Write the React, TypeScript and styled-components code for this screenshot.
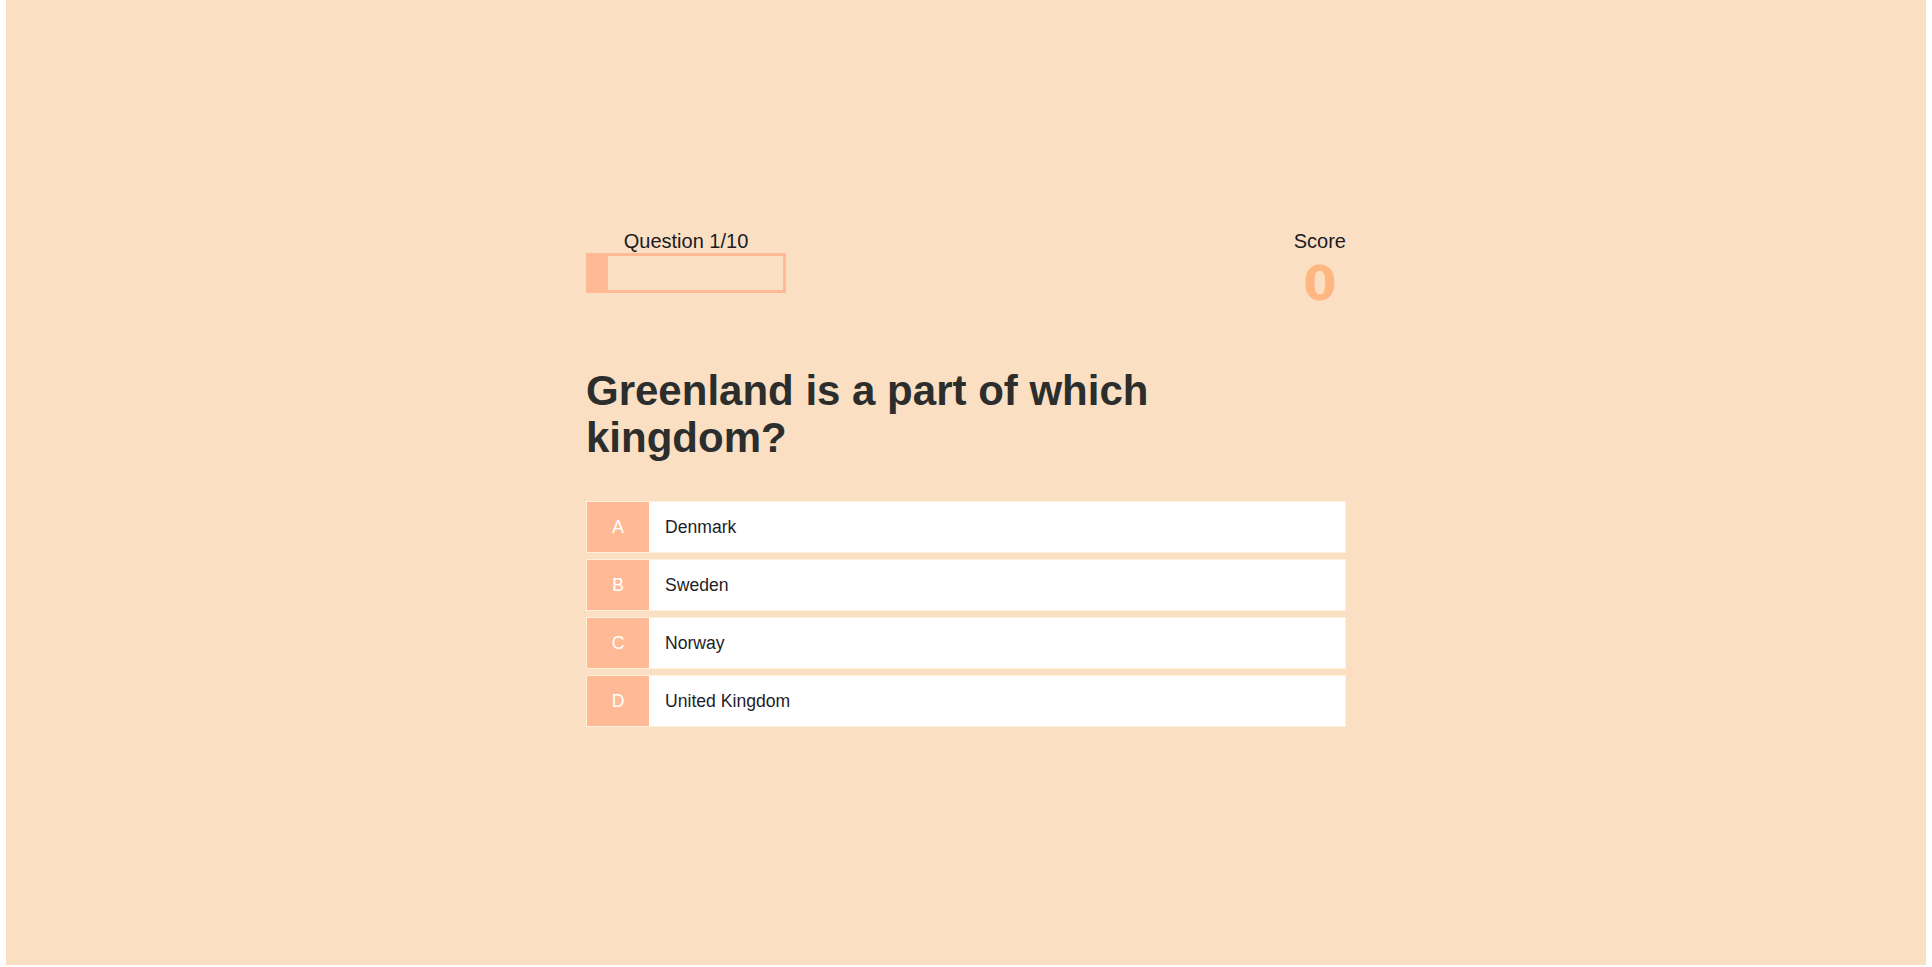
import React from "react";
import styled, { createGlobalStyle } from "styled-components";

const GlobalStyle = createGlobalStyle`
  html, body {
    margin: 0;
    padding: 0;
    background: #ffffff;
  }
  body {
    font-family: "Liberation Sans", Arial, sans-serif;
  }
  * { box-sizing: border-box; }
`;

const Page = styled.div`
  margin: 0 6px;
  height: 965px;
  background: #fadfc3;
  display: flex;
  justify-content: center;
  padding-top: 230px;
`;

const Quiz = styled.main`
  width: 760px;
  display: flex;
  flex-direction: column;
`;

const Header = styled.header`
  display: flex;
  justify-content: space-between;
  align-items: flex-start;
`;

const Progress = styled.div`
  width: 200px;
  display: flex;
  flex-direction: column;
`;

const Label = styled.div`
  font-size: 20px;
  line-height: 23px;
  color: #1b1b24;
  text-align: center;
`;

const Bar = styled.div`
  height: 40px;
  border: 3px solid #ffb994;
  display: flex;
`;

const Fill = styled.div`
  background: #ffb994;
  height: 100%;
`;

const ScoreBox = styled.div`
  display: flex;
  flex-direction: column;
  align-items: center;
`;

const ScoreValue = styled.div`
  font-family: "DejaVu Sans", Verdana, sans-serif;
  font-size: 48px;
  line-height: 55px;
  font-weight: 700;
  color: #ffb781;
  margin-top: 3px;
`;

const Question = styled.h1`
  margin: 56px 0 0;
  max-width: 80%;
  font-size: 42px;
  line-height: 47px;
  font-weight: 700;
  color: #2c2d2d;
`;

const Options = styled.ul`
  list-style: none;
  margin: 40px 0 0;
  padding: 0;
  display: flex;
  flex-direction: column;
  gap: 6px;
`;

const Option = styled.li`
  height: 52px;
  display: flex;
  background: #ffffff;
  border: 1px solid #fff0dc;
  cursor: pointer;
`;

const Letter = styled.span`
  width: 62px;
  flex: none;
  display: flex;
  align-items: center;
  justify-content: center;
  background: #ffba95;
  color: #ffffff;
  font-size: 17.6px;
`;

const OptionText = styled.span`
  display: flex;
  align-items: center;
  padding-left: 16px;
  font-size: 17.6px;
  color: #1e1e28;
`;

const answers = [
  { key: "A", text: "Denmark" },
  { key: "B", text: "Sweden" },
  { key: "C", text: "Norway" },
  { key: "D", text: "United Kingdom" },
];

export default function App() {
  const current = 1;
  const total = 10;
  return (
    <>
      <GlobalStyle />
      <Page>
        <Quiz>
          <Header>
            <Progress>
              <Label>
                Question {current}/{total}
              </Label>
              <Bar>
                <Fill style={{ width: `${(current / total) * 100}%` }} />
              </Bar>
            </Progress>
            <ScoreBox>
              <Label>Score</Label>
              <ScoreValue>0</ScoreValue>
            </ScoreBox>
          </Header>
          <Question>Greenland is a part of which kingdom?</Question>
          <Options>
            {answers.map((a) => (
              <Option key={a.key}>
                <Letter>{a.key}</Letter>
                <OptionText>{a.text}</OptionText>
              </Option>
            ))}
          </Options>
        </Quiz>
      </Page>
    </>
  );
}
